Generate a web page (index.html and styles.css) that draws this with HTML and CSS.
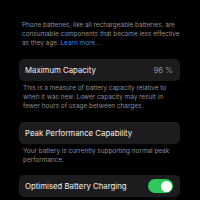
FILE: index.html
```html
<!DOCTYPE html>
<html>
<head>
<meta charset="utf-8">
<link rel="stylesheet" href="styles.css">
</head>
<body>
<div class="page">
  <p class="note intro">Phone batteries, like all rechargeable batteries, are consumable components that become less effective as they age. <span class="link">Learn more…</span></p>
  <div class="card"><span class="title">Maximum Capacity</span><span class="value">96 %</span></div>
  <p class="note">This is a measure of battery capacity relative to when it was new. Lower capacity may result in fewer hours of usage between charges.</p>
  <div class="card"><span class="title">Peak Performance Capability</span></div>
  <p class="note">Your battery is currently supporting normal peak performance.</p>
  <div class="card"><span class="title">Optimised Battery Charging</span><span class="toggle"><span class="knob"></span></span></div>
</div>
</body>
</html>
```
FILE: styles.css
```css
html, body { margin: 0; padding: 0; background: #000; }
body { width: 200px; height: 200px; overflow: hidden; font-family: Inter, "Noto Sans", sans-serif; -webkit-font-smoothing: antialiased; }
.page { padding: 21px 20px 0 19px; display: flex; flex-direction: column; }
.note { margin: 0; color: #8d8d93; font-size: 6.4px; line-height: 8.8px; padding-left: 4px; }
.intro { padding-left: 3px; margin-bottom: 12px; }
.link { color: #3b82f6; }
.card { background: #1c1c1e; border-radius: 5px; height: 22px; display: flex; align-items: center; justify-content: space-between; padding: 0 7px 0 6px; margin-bottom: 3px; }
.card + .note { margin-bottom: 11px; }
.title { color: #f2f2f2; font-size: 7.8px; }
.value { color: #8d8d93; font-size: 7.8px; }
.toggle { width: 25px; height: 14px; border-radius: 7px; background: #30c85a; display: flex; align-items: center; justify-content: flex-end; padding: 0 1.5px; box-sizing: border-box; }
.knob { width: 11px; height: 11px; border-radius: 50%; background: #fff; }
```
